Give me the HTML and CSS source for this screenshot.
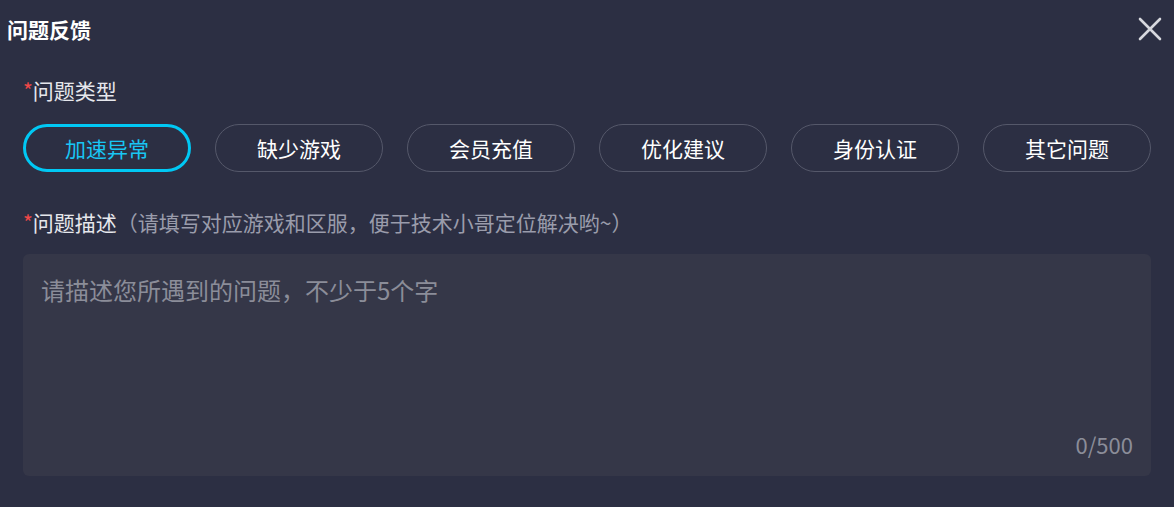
FILE: index.html
```html
<!DOCTYPE html>
<html lang="zh-CN">
<head>
  <meta charset="UTF-8">
  <title>问题反馈</title>
  <link rel="stylesheet" href="styles.css">
</head>
<body>
<div class="dialog">
  <div class="dialog-head">
    <h2>问题反馈</h2>
    <span class="close-btn">
      <svg width="24" height="24" viewBox="0 0 24 24"><path d="M2 2 L22 22 M22 2 L2 22" stroke="#d7d8de" stroke-width="2.6" stroke-linecap="round"/></svg>
    </span>
  </div>

  <div class="field-label"><span class="req">*</span>问题类型</div>
  <div class="type-list">
    <button class="type-btn active">加速异常</button>
    <button class="type-btn">缺少游戏</button>
    <button class="type-btn">会员充值</button>
    <button class="type-btn">优化建议</button>
    <button class="type-btn">身份认证</button>
    <button class="type-btn">其它问题</button>
  </div>

  <div class="field-label desc-label"><span class="req">*</span>问题描述<span class="hint">（请填写对应游戏和区服，便于技术小哥定位解决哟~）</span></div>
  <div class="text-box">
    <div class="placeholder">请描述您所遇到的问题，不少于5个字</div>
    <div class="counter">0/500</div>
  </div>
</div>
</body>
</html>
```

FILE: styles.css
```css
/* General */
body {
  margin: 0;
  padding: 0;
  background: #2c2f43;
  font-family: "Noto Sans CJK SC", "Noto Sans", sans-serif;
  color: #fff;
}
.dialog {
  width: 1174px;
  height: 507px;
  box-sizing: border-box;
  padding: 0 23px 0 23px;
}
/* Header */
.dialog-head {
  display: flex;
  justify-content: space-between;
  align-items: center;
  height: 58px;
  margin-left: -16px;
  margin-right: -11px;
}
.dialog-head h2 {
  margin: 0;
  font-size: 21px;
  font-weight: bold;
  color: #fff;
}
.close-btn {
  display: flex;
  width: 24px;
  height: 24px;
}
/* Fields */
.field-label {
  margin-top: 17px;
  font-size: 21px;
  line-height: 30px;
  color: #e6e7ec;
}
.req {
  color: #f04848;
}
.hint {
  color: #9a9cab;
}
.desc-label {
  margin-top: 35px;
}
/* Type buttons */
.type-list {
  display: flex;
  gap: 24px;
  margin-top: 19px;
}
.type-btn {
  width: 168px;
  height: 48px;
  box-sizing: border-box;
  border: 1px solid #55586a;
  border-radius: 24px;
  background: transparent;
  color: #fff;
  font-family: inherit;
  font-size: 21px;
  padding: 0;
  cursor: pointer;
}
.type-btn.active {
  border: 3px solid #00c8f4;
  color: #18c6f4;
}
/* Textarea */
.text-box {
  position: relative;
  margin-top: 17px;
  height: 222px;
  background: #353748;
  border-radius: 6px;
  padding: 20px 18px;
  box-sizing: border-box;
}
.placeholder {
  font-size: 24px;
  line-height: 32px;
  color: #8b8d99;
}
.counter {
  position: absolute;
  right: 18px;
  bottom: 17px;
  font-size: 22px;
  line-height: 30px;
  color: #8b8d99;
}
```
